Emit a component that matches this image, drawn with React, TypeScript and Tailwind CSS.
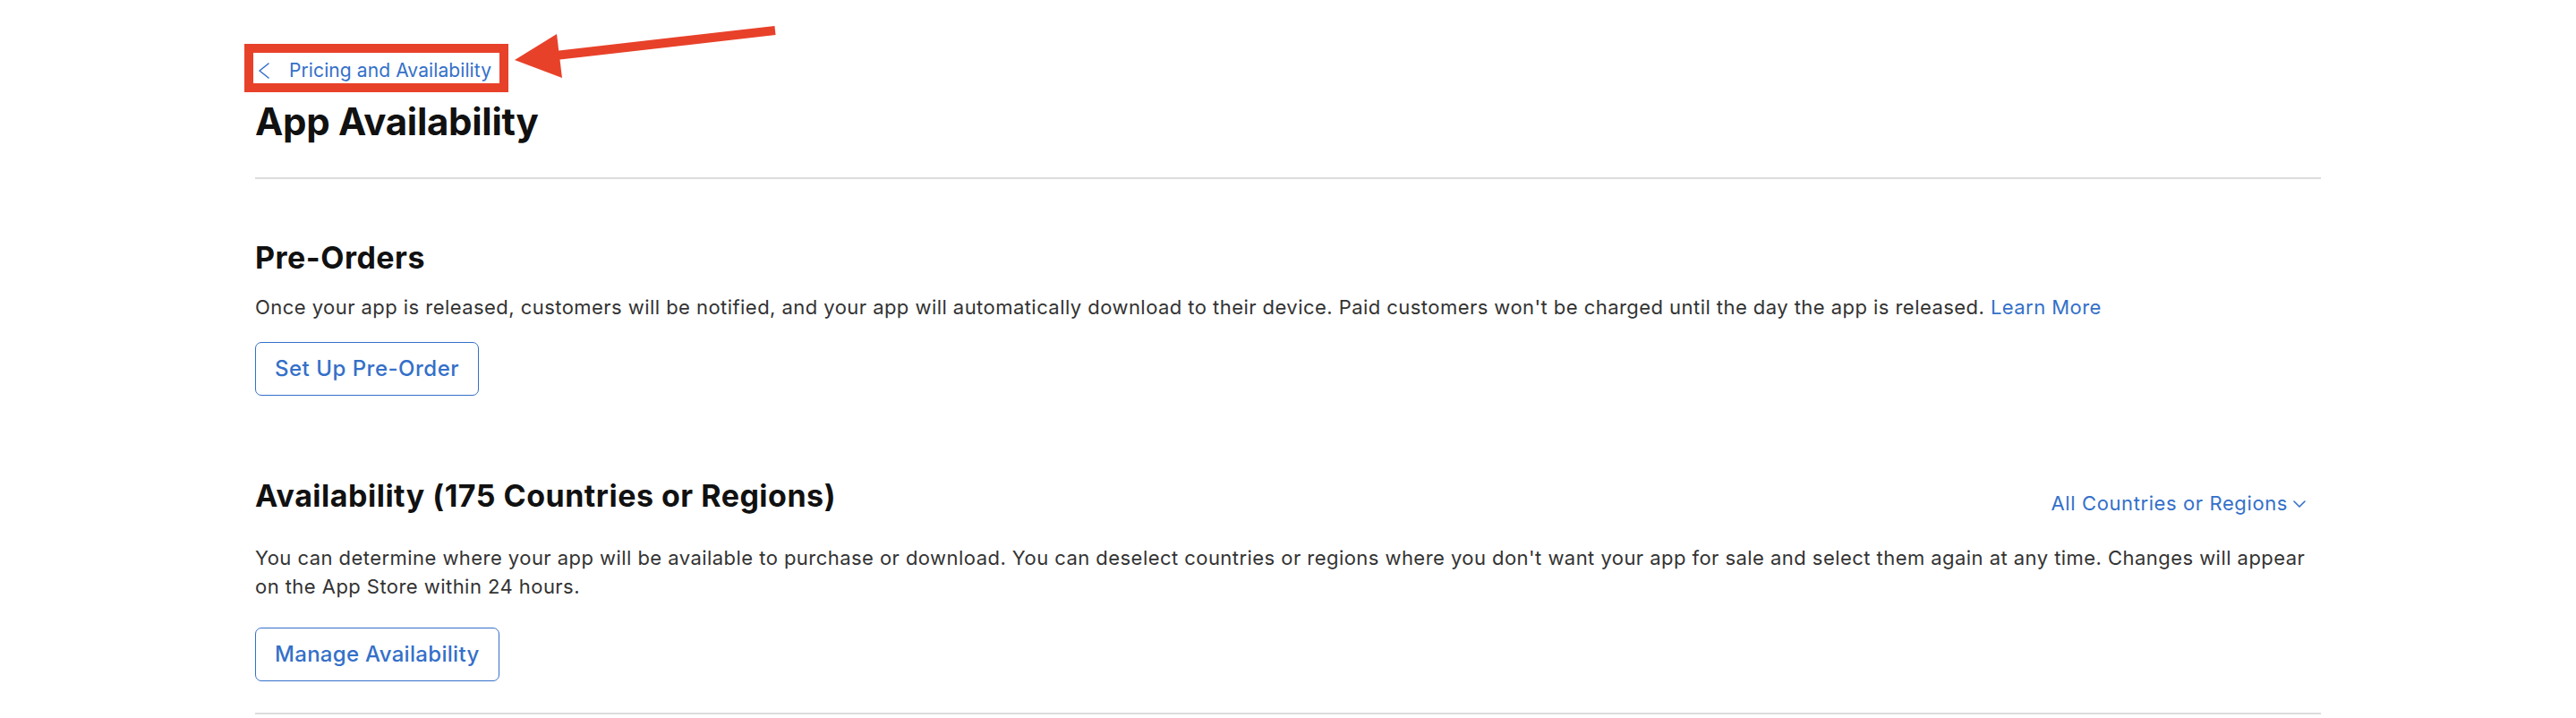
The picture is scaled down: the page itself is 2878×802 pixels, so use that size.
import React from "react";

const BLUE = "text-[#3470c9]";

export default function App() {
  return (
    <div className="relative min-h-screen w-full bg-white font-['Inter','Noto_Sans',sans-serif] text-[#1d1d1f]">
      <div className="mx-auto w-[2308px]">
        {/* Back link */}
        <div className="relative pt-[63px]">
          <a className={`flex h-[32px] items-center ${BLUE} text-[21px] leading-[32px] tracking-[0.1px]`}>
            <svg width="12" height="18" viewBox="0 0 12 18" className="ml-[4px] mr-[22px]" fill="none">
              <polyline points="11,1 1,9 11,17" stroke="#3470c9" strokeWidth="1.6" strokeLinejoin="round" strokeLinecap="round" />
            </svg>
            <span>Pricing and Availability</span>
          </a>
          {/* annotation box */}
          <div className="pointer-events-none absolute left-[-12px] top-[49px] h-[54px] w-[295px] border-[10px] border-[#e8412a]" />
        </div>

        <h1 className="mt-[16px] text-[42px] font-bold leading-[50px] tracking-[-0.3px] text-[#111]">App Availability</h1>

        <div className="mt-[37px] h-[2px] w-full bg-[#dcdcdc]" />

        {/* Pre-Orders */}
        <section>
          <h2 className="mt-[68px] text-[34px] font-bold leading-[40px] tracking-[0.5px] text-[#111]">Pre-Orders</h2>
          <p className="mt-[19px] text-[22px] leading-[32px] tracking-[0.45px] text-[#333]">
            Once your app is released, customers will be notified, and your app will automatically download to their device. Paid customers won't be charged until the day the app is released.{" "}
            <a className={BLUE}>Learn More</a>
          </p>
          <button className="mt-[23px] flex h-[60px] items-center rounded-[7px] border-[1.5px] border-[#3470c9] px-[21px] text-[24px] font-medium tracking-[0.5px] text-[#3470c9]">
            Set Up Pre-Order
          </button>
        </section>

        {/* Availability */}
        <section>
          <div className="mt-[92px] flex items-start justify-between">
            <h2 className="text-[34px] font-bold leading-[40px] tracking-[0.5px] text-[#111]">Availability (175 Countries or Regions)</h2>
            <a className={`mr-[17px] mt-[12px] flex items-center ${BLUE} text-[22px] leading-[32px] tracking-[0.6px]`}>
              <span>All Countries or Regions</span>
              <svg width="14" height="9" viewBox="0 0 14 9" className="ml-[6px] mt-[2px]" fill="none">
                <polyline points="1,1 7,7 13,1" stroke="#3470c9" strokeWidth="1.6" strokeLinejoin="round" strokeLinecap="round" />
              </svg>
            </a>
          </div>
          <p className="mt-[29px] text-[22px] leading-[32px] tracking-[0.45px] text-[#333]">
            You can determine where your app will be available to purchase or download. You can deselect countries or regions where you don't want your app for sale and select them again at any time. Changes will appear on the App Store within 24 hours.
          </p>
          <button className="mt-[30px] flex h-[60px] items-center rounded-[7px] border-[1.5px] border-[#3470c9] px-[21px] text-[24px] font-medium tracking-[0.3px] text-[#3470c9]">
            Manage Availability
          </button>
        </section>

        <div className="mt-[35px] h-[2px] w-full bg-[#dcdcdc]" />
      </div>

      {/* annotation arrow */}
      <svg className="pointer-events-none absolute left-0 top-0" width="2878" height="802" viewBox="0 0 2878 802">
        <line x1="612" y1="63" x2="866" y2="34" stroke="#e8412a" strokeWidth="10" />
        <polygon points="575,67 622,38 628,87" fill="#e8412a" />
      </svg>
    </div>
  );
}
